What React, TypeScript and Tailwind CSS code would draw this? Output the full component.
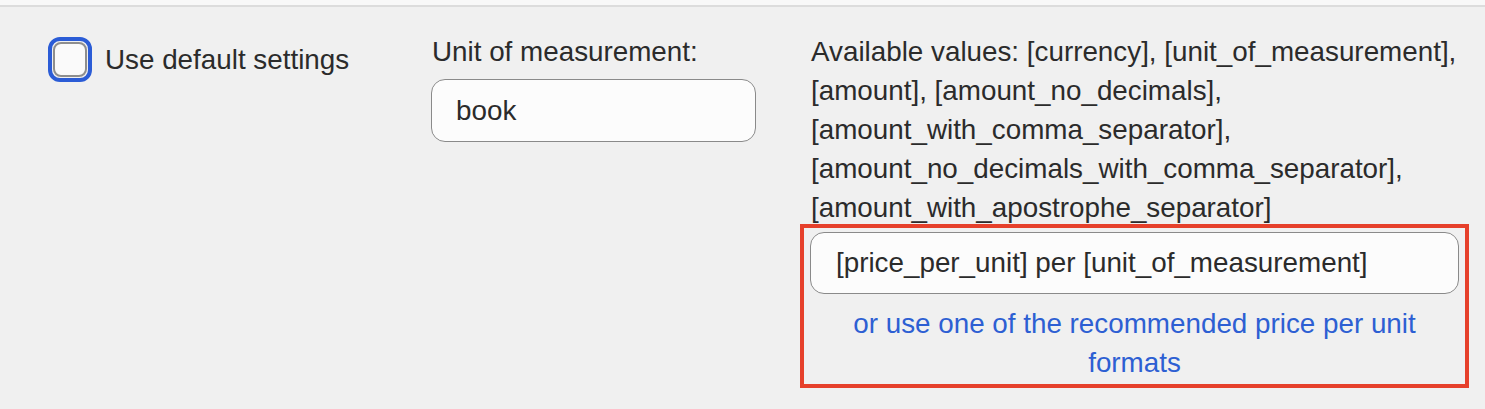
import { useState } from "react";

const valueTokens = [
  "Available values: [currency], [unit_of_measurement],",
  "[amount], [amount_no_decimals],",
  "[amount_with_comma_separator],",
  "[amount_no_decimals_with_comma_separator],",
  "[amount_with_apostrophe_separator]",
];

const Checkbox = ({ checked, onChange }: { checked: boolean; onChange: () => void }) => (
  <button
    type="button"
    onClick={onChange}
    className="flex h-[45px] w-[44px] shrink-0 rounded-[12px] border-[4px] border-[#2b5cd6] p-[1px]"
  >
    <span className="flex-1 rounded-[8px] border-2 border-[#8e8e8e] bg-[#fafafa]" />
  </button>
);

export default function App() {
  const [useDefaults, setUseDefaults] = useState(false);
  const [unit, setUnit] = useState("book");
  const [format, setFormat] = useState("[price_per_unit] per [unit_of_measurement]");

  return (
    <div className="h-[409px] w-[1485px] bg-[#f0f0f0] font-['Liberation_Sans',Arial,sans-serif] text-[27.8px] text-[#2b2b2b]">
      <div className="h-[5px] bg-[#f8f8f8]" />
      <div className="h-[2px] bg-[#dcdcdc]" />

      <div className="flex pt-[25px]">
        {/* default settings toggle */}
        <div className="ml-[48px] flex w-[383px] items-center gap-[13px] self-start pt-[5px]">
          <Checkbox checked={useDefaults} onChange={() => setUseDefaults(!useDefaults)} />
          <span className="leading-[39px]">Use default settings</span>
        </div>

        {/* unit */}
        <div className="flex w-[379px] flex-col">
          <label className="pl-[1px] leading-[39px]">Unit of measurement:</label>
          <input
            value={unit}
            onChange={(e) => setUnit(e.target.value)}
            className="mt-[8px] h-[63px] w-[325px] rounded-[14px] border border-[#8a8a8a] bg-[#fcfcfc] pl-[24px] text-[27.8px] text-[#2b2b2b] outline-none"
          />
        </div>

        {/* price per unit format */}
        <div className="flex w-[649px] flex-col">
          <p className="whitespace-nowrap pl-[1px] leading-[39px]">
            {valueTokens.map((line, i) => (
              <span key={i} className="block">
                {line}
              </span>
            ))}
          </p>

          <div className="relative mt-[5px]">
            <input
              value={format}
              onChange={(e) => setFormat(e.target.value)}
              className="h-[62px] w-full rounded-[14px] border border-[#8a8a8a] bg-[#fcfcfc] pl-[25px] text-[27.8px] text-[#2b2b2b] outline-none"
            />
            <a href="#" className="mt-[10px] block text-center leading-[39px] text-[#2d5fd3]">
              or use one of the recommended price per unit
              <br />
              formats
            </a>
            <span className="pointer-events-none absolute -top-[8px] -right-[10px] -bottom-[6px] -left-[10px] border-[4px] border-[#e6402b]" />
          </div>
        </div>
      </div>
    </div>
  );
}
